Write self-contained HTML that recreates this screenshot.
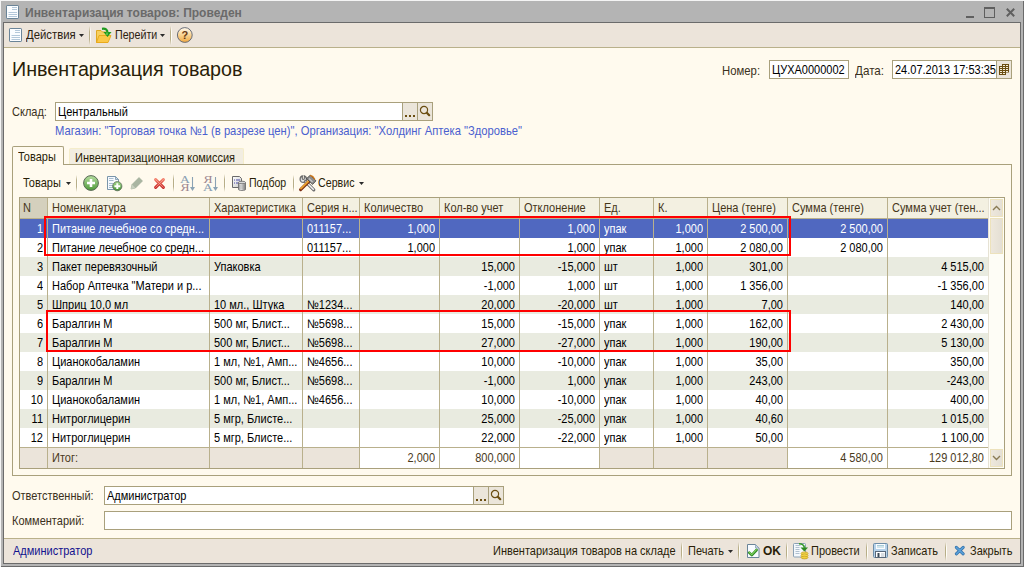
<!DOCTYPE html><html><head><meta charset="utf-8"><title>1C</title><style>
html,body{margin:0;padding:0;}
body{width:1024px;height:567px;overflow:hidden;background:#f4f4f4;font-family:"Liberation Sans",sans-serif;font-size:11px;color:#000;position:relative;}
.a{position:absolute;}
.t{position:absolute;white-space:nowrap;line-height:13px;height:13px;transform:scaleY(1.125);transform-origin:0 0;}
.n{transform:none;-webkit-text-stroke:0;}
.r{text-align:right;}
svg{position:absolute;overflow:visible;}
</style></head><body>
<div class="a" style="left:1px;top:1px;width:1022px;height:565px;background:#b4b4b4;border-right:1px solid #6b6b6b;border-bottom:1px solid #6b6b6b;"></div>
<div class="a" style="left:3px;top:22px;width:1016px;height:540px;border:1px solid #6b6b6b;background:#fffaee;"></div>
<div class="a" style="left:4px;top:23px;width:1016px;height:24px;background:#ece4da;"></div>
<div class="a" style="left:4px;top:47px;width:1016px;height:1px;background:#b9b08a;"></div>
<div class="a" style="left:4px;top:538px;width:1016px;height:1px;background:#b9b08a;"></div>
<div class="a" style="left:4px;top:539px;width:1016px;height:24px;background:#ece4da;"></div>
<svg style="left:6px;top:5px" width="13" height="14"><rect x="0.5" y="0.5" width="12" height="13" rx="0.6" fill="#fbfdff" stroke="#6a8498"/><path d="M6 2.5h5M6 4.5h5M2.5 7.5h8.5M2.5 9.5h8.5M2.5 11.5h8.5" stroke="#b4c8da" stroke-width="1"/></svg>
<div class="t n" style="left:25px;top:7px;color:#6a6a6a;font-weight:bold;font-size:12px;">Инвентаризация товаров: Проведен</div>
<div class="a" style="left:966px;top:16px;width:8px;height:2px;background:#5f5f5f"></div>
<div class="a" style="left:984px;top:7px;width:9px;height:8px;border:1px solid #5f5f5f;border-top-width:2px;"></div>
<svg style="left:1006px;top:8px" width="9" height="9"><path d="M0.8 0.8L8.2 8.2M8.2 0.8L0.8 8.2" stroke="#5f5f5f" stroke-width="2"/></svg>
<svg style="left:9px;top:28px" width="13" height="14"><rect x="0.5" y="0.5" width="12" height="13" rx="0.6" fill="#fbfdff" stroke="#6a8498"/><path d="M6 2.5h5M6 4.5h5M2.5 7.5h8.5M2.5 9.5h8.5M2.5 11.5h8.5" stroke="#b4c8da" stroke-width="1"/></svg>
<div class="t" style="left:26px;top:28px;color:#2a2010;transform:scale(1.03,1.125);">Действия</div>
<svg style="left:79px;top:34px" width="5" height="3"><path d="M0 0h5L2.5 3z" fill="#2a2a2a"/></svg>
<div class="a" style="left:89px;top:26px;width:1px;height:19px;background:linear-gradient(rgba(180,170,130,0),#b8ae88 30%,#b8ae88 70%,rgba(180,170,130,0))"></div><div class="a" style="left:90px;top:26px;width:1px;height:19px;background:linear-gradient(rgba(255,255,250,0),#fffef8 30%,#fffef8 70%,rgba(255,255,250,0))"></div>
<svg style="left:95px;top:27px" width="18" height="17"><path d="M1.5 3.5h4.5l1.5 1.5h5v10.5h-11z" fill="#f7d060" stroke="#e0a820"/><path d="M1.5 15.5l2.5-7h12l-3 7z" fill="#fbc848" stroke="#e8a818" stroke-width="0.9"/><path d="M7 1.8c3.5-0.5 5.5 0.5 5.5 4" fill="none" stroke="#1e9a1e" stroke-width="2.2"/><path d="M8.5 5h8l-4 5z" fill="#1e9a1e"/><path d="M12 5.5v2.5" stroke="#8fe070" stroke-width="1"/></svg>
<div class="t" style="left:115px;top:28px;color:#2a2010;transform:scale(0.97,1.125);">Перейти</div>
<svg style="left:160px;top:34px" width="5" height="3"><path d="M0 0h5L2.5 3z" fill="#2a2a2a"/></svg>
<div class="a" style="left:170px;top:26px;width:1px;height:19px;background:linear-gradient(rgba(180,170,130,0),#b8ae88 30%,#b8ae88 70%,rgba(180,170,130,0))"></div><div class="a" style="left:171px;top:26px;width:1px;height:19px;background:linear-gradient(rgba(255,255,250,0),#fffef8 30%,#fffef8 70%,rgba(255,255,250,0))"></div>
<svg style="left:176px;top:26px" width="18" height="18"><defs><linearGradient id="hg" x1="0" y1="0" x2="0" y2="1"><stop offset="0" stop-color="#fffaf0"/><stop offset="0.45" stop-color="#fad79a"/><stop offset="1" stop-color="#f0a840"/></linearGradient></defs><circle cx="8.8" cy="9" r="7.4" fill="url(#hg)" stroke="#6a6e78" stroke-width="1"/><text x="8.8" y="13.2" font-family="Liberation Sans" font-weight="bold" font-size="11" text-anchor="middle" fill="#6a3a12">?</text></svg>
<div class="t n" style="left:12px;top:57px;color:#2a1e08;font-size:19.7px;line-height:24px;height:24px;">Инвентаризация товаров</div>
<div class="t" style="left:722px;top:64px;color:#3a3020;transform:scale(1.03,1.125);">Номер:</div>
<div class="a" style="left:769px;top:60px;width:78px;height:17px;border:1px solid #a9a07c;background:#fff"></div>
<div class="t" style="left:772px;top:63px;color:#000;">ЦУХА0000002</div>
<div class="t" style="left:855px;top:64px;color:#3a3020;transform:scale(1.06,1.125);">Дата:</div>
<div class="a" style="left:892px;top:60px;width:118px;height:17px;border:1px solid #a9a07c;background:#fff"></div>
<div class="t" style="left:895px;top:63px;color:#000;">24.07.2013 17:53:35</div>
<div class="a" style="left:996px;top:61px;width:1px;height:17px;background:#a9a07c"></div>
<div class="a" style="left:997px;top:61px;width:14px;height:17px;background:#ebe5da"></div>
<svg style="left:999px;top:64px" width="10" height="11"><path d="M3 0h7v8.5h-3v2.5h-7v-9h3z" fill="#6b4e12"/><rect x="4" y="1" width="2" height="1" fill="#f4ecd8"/><rect x="7" y="1" width="2" height="1" fill="#f4ecd8"/><rect x="1" y="3" width="2" height="1" fill="#f4ecd8"/><rect x="4" y="3" width="2" height="1" fill="#f4ecd8"/><rect x="7" y="3" width="2" height="1" fill="#f4ecd8"/><rect x="1" y="5" width="2" height="1" fill="#f4ecd8"/><rect x="4" y="5" width="2" height="1" fill="#f4ecd8"/><rect x="7" y="5" width="2" height="1" fill="#f4ecd8"/><rect x="1" y="7" width="2" height="1" fill="#f4ecd8"/><rect x="4" y="7" width="2" height="1" fill="#f4ecd8"/><rect x="7" y="7" width="2" height="1" fill="#f4ecd8"/><rect x="1" y="9" width="2" height="1" fill="#f4ecd8"/><rect x="4" y="9" width="2" height="1" fill="#f4ecd8"/></svg>
<div class="t" style="left:12px;top:105px;color:#3a3020;">Склад:</div>
<div class="a" style="left:55px;top:102px;width:376px;height:17px;border:1px solid #a9a07c;background:#fff"></div>
<div class="a" style="left:402px;top:103px;width:1px;height:17px;background:#a9a07c"></div>
<div class="a" style="left:403px;top:103px;width:14px;height:17px;background:#ebe5da"></div>
<div class="a" style="left:417px;top:103px;width:1px;height:17px;background:#a9a07c"></div>
<div class="a" style="left:418px;top:103px;width:14px;height:17px;background:#ebe5da"></div>
<svg style="left:405px;top:115px" width="10" height="2"><rect x="0" y="0" width="2" height="2" fill="#6b4e12"/><rect x="4" y="0" width="2" height="2" fill="#6b4e12"/><rect x="8" y="0" width="2" height="2" fill="#6b4e12"/></svg>
<svg style="left:419px;top:105px" width="12" height="13"><circle cx="5" cy="5" r="3.6" fill="none" stroke="#6b4e12" stroke-width="1.2"/><path d="M7.8 7.8L10.2 10.2" stroke="#6b4e12" stroke-width="2.2" stroke-linecap="round"/></svg>
<div class="t" style="left:58px;top:105px;color:#000;">Центральный</div>
<div class="t" style="left:55px;top:124px;color:#4a5fcf;transform:scale(1.02,1.125);">Магазин: "Торговая точка №1 (в разрезе цен)", Организация: "Холдинг Аптека "Здоровье"</div>
<div class="a" style="left:69px;top:148px;width:173px;height:15px;background:#f2ede1;border:1px solid #f5edca;border-bottom:none;border-radius:2px 2px 0 0"></div>
<div class="a" style="left:12px;top:164px;width:998px;height:311px;border:1px solid #a9a07c;border-top:none;"></div>
<div class="a" style="left:63px;top:164px;width:949px;height:1px;background:#a9a07c"></div>
<div class="a" style="left:12px;top:146px;width:50px;height:18px;border:1px solid #a9a07c;border-bottom:none;border-radius:2px 2px 0 0;background:#fffaee"></div>
<div class="t" style="left:18px;top:150px;color:#2a1e08;">Товары</div>
<div class="t" style="left:75px;top:151px;color:#2a1e08;">Инвентаризационная комиссия</div>
<div class="t" style="left:23px;top:176px;color:#2a1e08;">Товары</div>
<svg style="left:66px;top:182px" width="5" height="3"><path d="M0 0h5L2.5 3z" fill="#2a2a2a"/></svg>
<div class="a" style="left:76px;top:175px;width:1px;height:17px;background:linear-gradient(rgba(180,170,130,0),#b8ae88 30%,#b8ae88 70%,rgba(180,170,130,0))"></div><div class="a" style="left:77px;top:175px;width:1px;height:17px;background:linear-gradient(rgba(255,255,250,0),#fffef8 30%,#fffef8 70%,rgba(255,255,250,0))"></div>
<svg style="left:83px;top:175px" width="16" height="16"><defs><linearGradient id="gp" x1="0" y1="0" x2="0" y2="1"><stop offset="0" stop-color="#b6dea0"/><stop offset="1" stop-color="#4f9a3a"/></linearGradient></defs><circle cx="8" cy="8" r="7.4" fill="url(#gp)" stroke="#5b6a58" stroke-width="1"/><path d="M8 4v8M4 8h8" stroke="#fff" stroke-width="2.6"/></svg>
<svg style="left:107px;top:176px" width="16" height="15"><defs><linearGradient id="dg" x1="0" y1="0" x2="0" y2="1"><stop offset="0" stop-color="#a8dc90"/><stop offset="1" stop-color="#3f9030"/></linearGradient></defs><path d="M0.5 0.5h8l3 3v10h-11z" fill="#f6faff" stroke="#7a95aa"/><path d="M8.5 0.5v3h3z" fill="#c8dcec" stroke="#7a95aa" stroke-width="0.8"/><path d="M2 2.5h4.5M2 4.5h4.5M2 7.5h4M2 9.5h4M2 11.5h4" stroke="#a6bccf"/><circle cx="10.3" cy="10.2" r="4.6" fill="url(#dg)" stroke="#5a6a58" stroke-width="0.8"/><path d="M10.3 7.3v5.8M7.4 10.2h5.8" stroke="#fff" stroke-width="2"/></svg>
<svg style="left:130px;top:176px" width="14" height="14"><path d="M1 13l1-4.5 7-7 3.5 3.5-7 7z" fill="#a9b5a2" stroke="#98a890" stroke-width="0.6"/><path d="M1 13l1-4.5 3.5 3.5z" fill="#c8d0c0"/></svg>
<svg style="left:153px;top:177px" width="13" height="13"><defs><linearGradient id="rx" x1="0" y1="0" x2="0" y2="1"><stop offset="0" stop-color="#f27a66"/><stop offset="1" stop-color="#c82a28"/></linearGradient></defs><path d="M2.6 2.6L10.4 10.4M10.4 2.6L2.6 10.4" stroke="url(#rx)" stroke-width="3" stroke-linecap="round"/><path d="M2.6 2.6L10.4 10.4M10.4 2.6L2.6 10.4" stroke="#fbc0b0" stroke-width="0.7" stroke-linecap="round" opacity="0.8"/></svg>
<div class="a" style="left:173px;top:174px;width:1px;height:18px;background:linear-gradient(rgba(180,170,130,0),#b8ae88 30%,#b8ae88 70%,rgba(180,170,130,0))"></div><div class="a" style="left:174px;top:174px;width:1px;height:18px;background:linear-gradient(rgba(255,255,250,0),#fffef8 30%,#fffef8 70%,rgba(255,255,250,0))"></div>
<svg style="left:181px;top:175px" width="16" height="17"><g transform="translate(4,0) scale(1.3,1) translate(-4,0)"><text x="4" y="8" font-family="Liberation Serif" font-size="10.5" text-anchor="middle" fill="#8aa0b2">A</text><text x="4" y="16.2" font-family="Liberation Serif" font-size="10.5" text-anchor="middle" fill="#a08890">Я</text></g><path d="M11.5 2v12" stroke="#8aa2b4" stroke-width="1.1"/><path d="M9 12h5l-2.5 4z" fill="#8aa2b4"/></svg>
<svg style="left:204px;top:175px" width="16" height="17"><g transform="translate(4,0) scale(1.3,1) translate(-4,0)"><text x="4" y="8" font-family="Liberation Serif" font-size="10.5" text-anchor="middle" fill="#a08890">Я</text><text x="4" y="16.2" font-family="Liberation Serif" font-size="10.5" text-anchor="middle" fill="#8aa0b2">A</text></g><path d="M11.5 2v12" stroke="#8aa2b4" stroke-width="1.1"/><path d="M9 12h5l-2.5 4z" fill="#8aa2b4"/></svg>
<div class="a" style="left:224px;top:174px;width:1px;height:18px;background:linear-gradient(rgba(180,170,130,0),#b8ae88 30%,#b8ae88 70%,rgba(180,170,130,0))"></div><div class="a" style="left:225px;top:174px;width:1px;height:18px;background:linear-gradient(rgba(255,255,250,0),#fffef8 30%,#fffef8 70%,rgba(255,255,250,0))"></div>
<svg style="left:231px;top:175px" width="16" height="16"><defs><linearGradient id="pd" x1="0" y1="0" x2="1" y2="1"><stop offset="0" stop-color="#ffffff"/><stop offset="1" stop-color="#c8c8c8"/></linearGradient><linearGradient id="cy" x1="0" y1="0" x2="1" y2="0"><stop offset="0" stop-color="#9a9a9a"/><stop offset="0.35" stop-color="#f4f4f4"/><stop offset="1" stop-color="#7a7a7a"/></linearGradient></defs><path d="M1.5 1.5h7l2 2v9h-9z" fill="url(#pd)" stroke="#6a6a6a"/><path d="M3 5h1M5 5h4M3 8h1M5 8h3" stroke="#4a4aa8"/><path d="M7.5 7.5v7c0 1.2 7 1.2 7 0v-7" fill="url(#cy)" stroke="#707070" stroke-width="0.9"/><ellipse cx="11" cy="7.5" rx="3.5" ry="1.3" fill="#d8d8d8" stroke="#707070" stroke-width="0.9"/><path d="M8 11h6M8 13h6" stroke="#8a8a8a" stroke-width="0.6"/></svg>
<div class="t" style="left:249px;top:176px;color:#2a1e08;transform:scale(0.96,1.125);">Подбор</div>
<div class="a" style="left:293px;top:175px;width:1px;height:17px;background:linear-gradient(rgba(180,170,130,0),#b8ae88 30%,#b8ae88 70%,rgba(180,170,130,0))"></div><div class="a" style="left:294px;top:175px;width:1px;height:17px;background:linear-gradient(rgba(255,255,250,0),#fffef8 30%,#fffef8 70%,rgba(255,255,250,0))"></div>
<svg style="left:299px;top:175px" width="18" height="16"><circle cx="4.3" cy="4.2" r="3.2" fill="#e6e6e6" stroke="#6e6e6e" stroke-width="1.3"/><path d="M3.3 0.5v3.8h2v-3.8" fill="#fffaf0" stroke="#505050" stroke-width="0.9"/><path d="M6.5 6.5L14.8 14.8" stroke="#6e6e6e" stroke-width="3.2" stroke-linecap="round"/><path d="M6.5 6.5L14.8 14.8" stroke="#f4f4f4" stroke-width="1.5"/><path d="M1.6 14.6L11 5.4" stroke="#7a2a10" stroke-width="3" stroke-linecap="round"/><path d="M1.4 14.2L10.6 5" stroke="#e8a030" stroke-width="1.8"/><path d="M7.6 3.6L11.2 0.2L17 5.8L13.6 9.4z" fill="#8c8c8c" stroke="#2e2e2e" stroke-width="0.7"/><path d="M11.2 0.4L13.8 1.6L15.8 4.4" fill="none" stroke="#d07818" stroke-width="1.3"/><path d="M10 3.5l3.5 3.5" stroke="#c8c8c8" stroke-width="1.2"/></svg>
<div class="t" style="left:318px;top:176px;color:#2a1e08;transform:scale(0.97,1.125);">Сервис</div>
<svg style="left:359px;top:182px" width="5" height="3"><path d="M0 0h5L2.5 3z" fill="#2a2a2a"/></svg>
<div class="a" style="left:19px;top:197px;width:984px;height:270px;border:1px solid #a9a07c;background:#fefdf6"></div>
<div class="a" style="left:20px;top:198px;width:968px;height:20px;background:#f3f0e1"></div>
<div class="a" style="left:20px;top:198px;width:27px;height:20px;background:#d4d0bd"></div>
<div class="a" style="left:20px;top:218px;width:968px;height:1px;background:#b9b08c"></div>
<div class="a" style="left:20px;top:219px;width:968px;height:19px;background:#5068c0"></div>
<div class="t r" style="right:981px;top:222px;color:#fff;">1</div>
<div class="t" style="left:52px;top:222px;color:#fff;">Питание лечебное со средн...</div>
<div class="t" style="left:307px;top:222px;color:#fff;">011157...</div>
<div class="t r" style="right:589px;top:222px;color:#fff;">1,000</div>
<div class="t r" style="right:429px;top:222px;color:#fff;">1,000</div>
<div class="t" style="left:604px;top:222px;color:#fff;">упак</div>
<div class="t r" style="right:321px;top:222px;color:#fff;">1,000</div>
<div class="t r" style="right:241px;top:222px;color:#fff;">2 500,00</div>
<div class="t r" style="right:141px;top:222px;color:#fff;">2 500,00</div>
<div class="a" style="left:20px;top:238px;width:968px;height:19px;background:#ffffff"></div>
<div class="t r" style="right:981px;top:241px;color:#000;">2</div>
<div class="t" style="left:52px;top:241px;color:#000;">Питание лечебное со средн...</div>
<div class="t" style="left:307px;top:241px;color:#000;">011157...</div>
<div class="t r" style="right:589px;top:241px;color:#000;">1,000</div>
<div class="t r" style="right:429px;top:241px;color:#000;">1,000</div>
<div class="t" style="left:604px;top:241px;color:#000;">упак</div>
<div class="t r" style="right:321px;top:241px;color:#000;">1,000</div>
<div class="t r" style="right:241px;top:241px;color:#000;">2 080,00</div>
<div class="t r" style="right:141px;top:241px;color:#000;">2 080,00</div>
<div class="a" style="left:20px;top:257px;width:968px;height:19px;background:#e9ebe0"></div>
<div class="t r" style="right:981px;top:260px;color:#000;">3</div>
<div class="t" style="left:52px;top:260px;color:#000;">Пакет перевязочный</div>
<div class="t" style="left:214px;top:260px;color:#000;">Упаковка</div>
<div class="t r" style="right:509px;top:260px;color:#000;">15,000</div>
<div class="t r" style="right:429px;top:260px;color:#000;">-15,000</div>
<div class="t" style="left:604px;top:260px;color:#000;">шт</div>
<div class="t r" style="right:321px;top:260px;color:#000;">1,000</div>
<div class="t r" style="right:241px;top:260px;color:#000;">301,00</div>
<div class="t r" style="right:40px;top:260px;color:#000;">4 515,00</div>
<div class="a" style="left:20px;top:276px;width:968px;height:19px;background:#ffffff"></div>
<div class="t r" style="right:981px;top:279px;color:#000;">4</div>
<div class="t" style="left:52px;top:279px;color:#000;">Набор Аптечка "Матери и р...</div>
<div class="t r" style="right:509px;top:279px;color:#000;">-1,000</div>
<div class="t r" style="right:429px;top:279px;color:#000;">1,000</div>
<div class="t" style="left:604px;top:279px;color:#000;">шт</div>
<div class="t r" style="right:321px;top:279px;color:#000;">1,000</div>
<div class="t r" style="right:241px;top:279px;color:#000;">1 356,00</div>
<div class="t r" style="right:40px;top:279px;color:#000;">-1 356,00</div>
<div class="a" style="left:20px;top:295px;width:968px;height:19px;background:#e9ebe0"></div>
<div class="t r" style="right:981px;top:298px;color:#000;">5</div>
<div class="t" style="left:52px;top:298px;color:#000;">Шприц 10,0 мл</div>
<div class="t" style="left:214px;top:298px;color:#000;">10 мл., Штука</div>
<div class="t" style="left:307px;top:298px;color:#000;">№1234...</div>
<div class="t r" style="right:509px;top:298px;color:#000;">20,000</div>
<div class="t r" style="right:429px;top:298px;color:#000;">-20,000</div>
<div class="t" style="left:604px;top:298px;color:#000;">шт</div>
<div class="t r" style="right:321px;top:298px;color:#000;">1,000</div>
<div class="t r" style="right:241px;top:298px;color:#000;">7,00</div>
<div class="t r" style="right:40px;top:298px;color:#000;">140,00</div>
<div class="a" style="left:20px;top:314px;width:968px;height:19px;background:#ffffff"></div>
<div class="t r" style="right:981px;top:317px;color:#000;">6</div>
<div class="t" style="left:52px;top:317px;color:#000;">Баралгин М</div>
<div class="t" style="left:214px;top:317px;color:#000;">500 мг, Блист...</div>
<div class="t" style="left:307px;top:317px;color:#000;">№5698...</div>
<div class="t r" style="right:509px;top:317px;color:#000;">15,000</div>
<div class="t r" style="right:429px;top:317px;color:#000;">-15,000</div>
<div class="t" style="left:604px;top:317px;color:#000;">упак</div>
<div class="t r" style="right:321px;top:317px;color:#000;">1,000</div>
<div class="t r" style="right:241px;top:317px;color:#000;">162,00</div>
<div class="t r" style="right:40px;top:317px;color:#000;">2 430,00</div>
<div class="a" style="left:20px;top:333px;width:968px;height:19px;background:#e9ebe0"></div>
<div class="t r" style="right:981px;top:336px;color:#000;">7</div>
<div class="t" style="left:52px;top:336px;color:#000;">Баралгин М</div>
<div class="t" style="left:214px;top:336px;color:#000;">500 мг, Блист...</div>
<div class="t" style="left:307px;top:336px;color:#000;">№5698...</div>
<div class="t r" style="right:509px;top:336px;color:#000;">27,000</div>
<div class="t r" style="right:429px;top:336px;color:#000;">-27,000</div>
<div class="t" style="left:604px;top:336px;color:#000;">упак</div>
<div class="t r" style="right:321px;top:336px;color:#000;">1,000</div>
<div class="t r" style="right:241px;top:336px;color:#000;">190,00</div>
<div class="t r" style="right:40px;top:336px;color:#000;">5 130,00</div>
<div class="a" style="left:20px;top:352px;width:968px;height:19px;background:#ffffff"></div>
<div class="t r" style="right:981px;top:355px;color:#000;">8</div>
<div class="t" style="left:52px;top:355px;color:#000;">Цианокобаламин</div>
<div class="t" style="left:214px;top:355px;color:#000;">1 мл, №1, Амп...</div>
<div class="t" style="left:307px;top:355px;color:#000;">№4656...</div>
<div class="t r" style="right:509px;top:355px;color:#000;">10,000</div>
<div class="t r" style="right:429px;top:355px;color:#000;">-10,000</div>
<div class="t" style="left:604px;top:355px;color:#000;">упак</div>
<div class="t r" style="right:321px;top:355px;color:#000;">1,000</div>
<div class="t r" style="right:241px;top:355px;color:#000;">35,00</div>
<div class="t r" style="right:40px;top:355px;color:#000;">350,00</div>
<div class="a" style="left:20px;top:371px;width:968px;height:19px;background:#e9ebe0"></div>
<div class="t r" style="right:981px;top:374px;color:#000;">9</div>
<div class="t" style="left:52px;top:374px;color:#000;">Баралгин М</div>
<div class="t" style="left:214px;top:374px;color:#000;">500 мг, Блист...</div>
<div class="t" style="left:307px;top:374px;color:#000;">№5698...</div>
<div class="t r" style="right:509px;top:374px;color:#000;">-1,000</div>
<div class="t r" style="right:429px;top:374px;color:#000;">1,000</div>
<div class="t" style="left:604px;top:374px;color:#000;">упак</div>
<div class="t r" style="right:321px;top:374px;color:#000;">1,000</div>
<div class="t r" style="right:241px;top:374px;color:#000;">243,00</div>
<div class="t r" style="right:40px;top:374px;color:#000;">-243,00</div>
<div class="a" style="left:20px;top:390px;width:968px;height:19px;background:#ffffff"></div>
<div class="t r" style="right:981px;top:393px;color:#000;">10</div>
<div class="t" style="left:52px;top:393px;color:#000;">Цианокобаламин</div>
<div class="t" style="left:214px;top:393px;color:#000;">1 мл, №1, Амп...</div>
<div class="t" style="left:307px;top:393px;color:#000;">№4656...</div>
<div class="t r" style="right:509px;top:393px;color:#000;">10,000</div>
<div class="t r" style="right:429px;top:393px;color:#000;">-10,000</div>
<div class="t" style="left:604px;top:393px;color:#000;">упак</div>
<div class="t r" style="right:321px;top:393px;color:#000;">1,000</div>
<div class="t r" style="right:241px;top:393px;color:#000;">40,00</div>
<div class="t r" style="right:40px;top:393px;color:#000;">400,00</div>
<div class="a" style="left:20px;top:409px;width:968px;height:19px;background:#e9ebe0"></div>
<div class="t r" style="right:981px;top:412px;color:#000;">11</div>
<div class="t" style="left:52px;top:412px;color:#000;">Нитроглицерин</div>
<div class="t" style="left:214px;top:412px;color:#000;">5 мгр, Блисте...</div>
<div class="t r" style="right:509px;top:412px;color:#000;">25,000</div>
<div class="t r" style="right:429px;top:412px;color:#000;">-25,000</div>
<div class="t" style="left:604px;top:412px;color:#000;">упак</div>
<div class="t r" style="right:321px;top:412px;color:#000;">1,000</div>
<div class="t r" style="right:241px;top:412px;color:#000;">40,60</div>
<div class="t r" style="right:40px;top:412px;color:#000;">1 015,00</div>
<div class="a" style="left:20px;top:428px;width:968px;height:19px;background:#ffffff"></div>
<div class="t r" style="right:981px;top:431px;color:#000;">12</div>
<div class="t" style="left:52px;top:431px;color:#000;">Нитроглицерин</div>
<div class="t" style="left:214px;top:431px;color:#000;">5 мгр, Блисте...</div>
<div class="t r" style="right:509px;top:431px;color:#000;">22,000</div>
<div class="t r" style="right:429px;top:431px;color:#000;">-22,000</div>
<div class="t" style="left:604px;top:431px;color:#000;">упак</div>
<div class="t r" style="right:321px;top:431px;color:#000;">1,000</div>
<div class="t r" style="right:241px;top:431px;color:#000;">50,00</div>
<div class="t r" style="right:40px;top:431px;color:#000;">1 100,00</div>
<div class="t" style="left:23px;top:201px;color:#46361a;">N</div>
<div class="t" style="left:52px;top:201px;color:#46361a;">Номенклатура</div>
<div class="t" style="left:214px;top:201px;color:#46361a;">Характеристика</div>
<div class="t" style="left:307px;top:201px;color:#46361a;">Серия н...</div>
<div class="t" style="left:364px;top:201px;color:#46361a;">Количество</div>
<div class="t" style="left:444px;top:201px;color:#46361a;">Кол-во учет</div>
<div class="t" style="left:524px;top:201px;color:#46361a;">Отклонение</div>
<div class="t" style="left:604px;top:201px;color:#46361a;">Ед.</div>
<div class="t" style="left:658px;top:201px;color:#46361a;">К.</div>
<div class="t" style="left:712px;top:201px;color:#46361a;">Цена (тенге)</div>
<div class="t" style="left:792px;top:201px;color:#46361a;">Сумма (тенге)</div>
<div class="t" style="left:892px;top:201px;color:#46361a;">Сумма учет (тен...</div>
<div class="a" style="left:20px;top:447px;width:968px;height:1px;background:#b9b08c"></div>
<div class="a" style="left:20px;top:448px;width:27px;height:20px;background:#ebe4da"></div>
<div class="a" style="left:48px;top:448px;width:161px;height:20px;background:#ebe4da"></div>
<div class="a" style="left:210px;top:448px;width:92px;height:20px;background:#ebe4da"></div>
<div class="a" style="left:303px;top:448px;width:56px;height:20px;background:#ebe4da"></div>
<div class="a" style="left:360px;top:448px;width:79px;height:20px;background:#fff"></div>
<div class="a" style="left:440px;top:448px;width:79px;height:20px;background:#fff"></div>
<div class="a" style="left:520px;top:448px;width:79px;height:20px;background:#fff"></div>
<div class="a" style="left:600px;top:448px;width:53px;height:20px;background:#ebe4da"></div>
<div class="a" style="left:654px;top:448px;width:53px;height:20px;background:#ebe4da"></div>
<div class="a" style="left:708px;top:448px;width:79px;height:20px;background:#ebe4da"></div>
<div class="a" style="left:788px;top:448px;width:99px;height:20px;background:#fff"></div>
<div class="a" style="left:888px;top:448px;width:100px;height:20px;background:#fff"></div>
<div class="t" style="left:52px;top:451px;color:#4a3a1c;">Итог:</div>
<div class="t r" style="right:589px;top:451px;color:#4a3a1c;">2,000</div>
<div class="t r" style="right:509px;top:451px;color:#4a3a1c;">800,000</div>
<div class="t r" style="right:141px;top:451px;color:#4a3a1c;">4 580,00</div>
<div class="t r" style="right:40px;top:451px;color:#4a3a1c;">129 012,80</div>
<div class="a" style="left:47px;top:198px;width:1px;height:270px;background:#b9b08c"></div>
<div class="a" style="left:209px;top:198px;width:1px;height:270px;background:#b9b08c"></div>
<div class="a" style="left:302px;top:198px;width:1px;height:270px;background:#b9b08c"></div>
<div class="a" style="left:359px;top:198px;width:1px;height:270px;background:#b9b08c"></div>
<div class="a" style="left:439px;top:198px;width:1px;height:270px;background:#b9b08c"></div>
<div class="a" style="left:519px;top:198px;width:1px;height:270px;background:#b9b08c"></div>
<div class="a" style="left:599px;top:198px;width:1px;height:270px;background:#b9b08c"></div>
<div class="a" style="left:653px;top:198px;width:1px;height:270px;background:#b9b08c"></div>
<div class="a" style="left:707px;top:198px;width:1px;height:270px;background:#b9b08c"></div>
<div class="a" style="left:787px;top:198px;width:1px;height:270px;background:#b9b08c"></div>
<div class="a" style="left:887px;top:198px;width:1px;height:270px;background:#b9b08c"></div>
<div class="a" style="left:988px;top:198px;width:1px;height:270px;background:#e6e2d4"></div>
<div class="a" style="left:990px;top:199px;width:11px;height:16px;border:1px solid #ede2bc;background:linear-gradient(90deg,#eee8dc,#e4dfd4)"></div>
<div class="a" style="left:990px;top:218px;width:11px;height:34px;border:1px solid #ede2bc;background:linear-gradient(90deg,#eee8dc,#e4dfd4)"></div>
<div class="a" style="left:990px;top:449px;width:11px;height:16px;border:1px solid #ede2bc;background:linear-gradient(90deg,#eee8dc,#e4dfd4)"></div>
<svg style="left:992px;top:205px" width="9" height="6"><path d="M1 5L4.5 1.5L8 5" fill="none" stroke="#8a7b55" stroke-width="1.4"/></svg>
<svg style="left:992px;top:455px" width="9" height="6"><path d="M1 1L4.5 4.5L8 1" fill="none" stroke="#8a7b55" stroke-width="1.4"/></svg>
<div class="a" style="left:44px;top:216px;width:743px;height:36px;border:2px solid #ff0000"></div>
<div class="a" style="left:46px;top:310px;width:741px;height:38px;border:2px solid #ff0000"></div>
<div class="t" style="left:12px;top:489px;color:#3a3020;">Ответственный:</div>
<div class="a" style="left:104px;top:486px;width:398px;height:17px;border:1px solid #a9a07c;background:#fff"></div>
<div class="a" style="left:473px;top:487px;width:1px;height:17px;background:#a9a07c"></div>
<div class="a" style="left:474px;top:487px;width:14px;height:17px;background:#ebe5da"></div>
<div class="a" style="left:488px;top:487px;width:1px;height:17px;background:#a9a07c"></div>
<div class="a" style="left:489px;top:487px;width:14px;height:17px;background:#ebe5da"></div>
<svg style="left:476px;top:499px" width="10" height="2"><rect x="0" y="0" width="2" height="2" fill="#6b4e12"/><rect x="4" y="0" width="2" height="2" fill="#6b4e12"/><rect x="8" y="0" width="2" height="2" fill="#6b4e12"/></svg>
<svg style="left:490px;top:489px" width="12" height="13"><circle cx="5" cy="5" r="3.6" fill="none" stroke="#6b4e12" stroke-width="1.2"/><path d="M7.8 7.8L10.2 10.2" stroke="#6b4e12" stroke-width="2.2" stroke-linecap="round"/></svg>
<div class="t" style="left:107px;top:489px;color:#000;">Администратор</div>
<div class="t" style="left:12px;top:514px;color:#3a3020;">Комментарий:</div>
<div class="a" style="left:104px;top:511px;width:906px;height:17px;border:1px solid #a9a07c;background:#fff"></div>
<div class="t" style="left:13px;top:544px;color:#12128e;">Администратор</div>
<div class="t" style="left:493px;top:544px;color:#2a1e08;">Инвентаризация товаров на складе</div>
<div class="a" style="left:681px;top:542px;width:1px;height:19px;background:linear-gradient(rgba(180,170,130,0),#b8ae88 30%,#b8ae88 70%,rgba(180,170,130,0))"></div><div class="a" style="left:682px;top:542px;width:1px;height:19px;background:linear-gradient(rgba(255,255,250,0),#fffef8 30%,#fffef8 70%,rgba(255,255,250,0))"></div>
<div class="t" style="left:688px;top:544px;color:#2a1e08;">Печать</div>
<svg style="left:728px;top:550px" width="5" height="3"><path d="M0 0h5L2.5 3z" fill="#2a2a2a"/></svg>
<div class="a" style="left:738px;top:542px;width:1px;height:19px;background:linear-gradient(rgba(180,170,130,0),#b8ae88 30%,#b8ae88 70%,rgba(180,170,130,0))"></div><div class="a" style="left:739px;top:542px;width:1px;height:19px;background:linear-gradient(rgba(255,255,250,0),#fffef8 30%,#fffef8 70%,rgba(255,255,250,0))"></div>
<svg style="left:747px;top:544px" width="13" height="14"><path d="M0.5 0.5h8l3.5 3.5v9.5h-11.5z" fill="#f8fbff" stroke="#6a8498"/><path d="M8.5 0.5v3.5h3.5z" fill="#c4d8e8" stroke="#8aa0b4" stroke-width="0.8"/><path d="M2.2 8.6l2.6 2.6 4.8-5.2" fill="none" stroke="#2f8a22" stroke-width="2.6" stroke-linecap="round" stroke-linejoin="round"/><path d="M2.4 8.4l2.4 2.2 4.6-5" fill="none" stroke="#7ed060" stroke-width="1.1" stroke-linecap="round"/></svg>
<div class="t n" style="left:763px;top:545px;color:#2a1e08;font-weight:bold;font-size:12px;">OK</div>
<div class="a" style="left:786px;top:542px;width:1px;height:19px;background:linear-gradient(rgba(180,170,130,0),#b8ae88 30%,#b8ae88 70%,rgba(180,170,130,0))"></div><div class="a" style="left:787px;top:542px;width:1px;height:19px;background:linear-gradient(rgba(255,255,250,0),#fffef8 30%,#fffef8 70%,rgba(255,255,250,0))"></div>
<svg style="left:793px;top:543px" width="16" height="16"><rect x="0.5" y="0.5" width="12" height="13.5" rx="1" fill="#f4f8fc" stroke="#8aa0b4"/><path d="M2.5 2.5h5M2.5 4.5h4M2.5 6.5h4M2.5 8.5h4M2.5 10.5h4" stroke="#b0c0d0"/><path d="M6 0.8c3 0 5 1.5 5.5 4" fill="none" stroke="#3a9a28" stroke-width="1.6"/><path d="M7.5 4.5h7.5l-3.75 4z" fill="#2e8a20"/><ellipse cx="11.5" cy="10.5" rx="3.5" ry="1.6" fill="#f6dc50" stroke="#c8a020" stroke-width="0.8"/><ellipse cx="11.5" cy="12.5" rx="3.5" ry="1.6" fill="#f6dc50" stroke="#c8a020" stroke-width="0.8"/><ellipse cx="11.5" cy="14.5" rx="3.5" ry="1.4" fill="#f0d040" stroke="#c8a020" stroke-width="0.8"/></svg>
<div class="t" style="left:811px;top:544px;color:#2a1e08;">Провести</div>
<div class="a" style="left:866px;top:542px;width:1px;height:19px;background:linear-gradient(rgba(180,170,130,0),#b8ae88 30%,#b8ae88 70%,rgba(180,170,130,0))"></div><div class="a" style="left:867px;top:542px;width:1px;height:19px;background:linear-gradient(rgba(255,255,250,0),#fffef8 30%,#fffef8 70%,rgba(255,255,250,0))"></div>
<svg style="left:873px;top:543px" width="15" height="15"><rect x="0.5" y="0.5" width="14" height="14" rx="1" fill="#b6d2ea" stroke="#6f8ea8"/><rect x="3" y="1" width="9" height="5" fill="#fbfdff"/><path d="M4 2.5h7M4 4h7" stroke="#a8ccd8"/><rect x="2.5" y="8.5" width="10" height="6" fill="#fff" stroke="#58687a"/><rect x="4.5" y="10" width="2" height="4" fill="#3c4a58"/><rect x="8" y="10" width="3.5" height="4" fill="#d8dde2"/></svg>
<div class="t" style="left:891px;top:544px;color:#2a1e08;">Записать</div>
<div class="a" style="left:945px;top:542px;width:1px;height:19px;background:linear-gradient(rgba(180,170,130,0),#b8ae88 30%,#b8ae88 70%,rgba(180,170,130,0))"></div><div class="a" style="left:946px;top:542px;width:1px;height:19px;background:linear-gradient(rgba(255,255,250,0),#fffef8 30%,#fffef8 70%,rgba(255,255,250,0))"></div>
<svg style="left:954px;top:545px" width="12" height="11"><path d="M2.3 2.3L9.2 8.8M9.2 2.3L2.3 8.8" stroke="#2f6ea8" stroke-width="3" stroke-linecap="round"/><path d="M2.3 2.3L9.2 8.8M9.2 2.3L2.3 8.8" stroke="#5aa0d8" stroke-width="1.6" stroke-linecap="round"/></svg>
<div class="t" style="left:970px;top:544px;color:#2a1e08;">Закрыть</div>
</body></html>
